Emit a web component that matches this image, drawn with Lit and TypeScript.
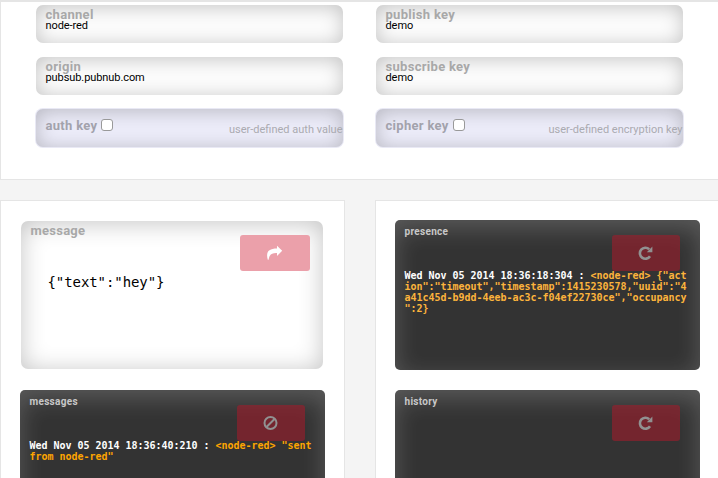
import { LitElement, html, css, svg } from "lit";
import { customElement, property } from "lit/decorators.js";
import { classMap } from "lit/directives/class-map.js";

type IconName = "send" | "reload" | "ban";

@customElement("glyph-icon")
class GlyphIcon extends LitElement {
  @property() name: IconName = "send";
  static styles = css`
    :host { display: block; width: 16px; height: 16px; }
    svg { display: block; }
  `;
  render() {
    const shapes = {
      send: svg`<path fill="currentColor" d="M10 .8 15.2 5.8 10 10.9V8C5.1 7.8 2.5 9 1.6 14.8H.8C-1.4 7 1.6 3.6 10 3.6Z"/>`,
      reload: svg`<path fill="none" stroke="currentColor" stroke-width="2.6" d="M12 11.2A5.5 5.5 0 1 1 11.2 4.2"/><path fill="currentColor" d="M14.4 1.6V7.2H8.8Z"/>`,
      ban: svg`<g fill="none" stroke="currentColor" stroke-width="2"><circle cx="7.5" cy="8" r="6"/><path d="M3.5 12 11.5 4"/></g>`,
    };
    return html`<svg width="16" height="16" viewBox="0 0 16 16">${shapes[this.name]}</svg>`;
  }
}

@customElement("key-field")
class KeyField extends LitElement {
  @property() label = "";
  @property() value = "";
  @property() hint = "";
  static styles = css`
    :host { display: block; }
    .field {
      height: 38px; box-sizing: border-box; border-radius: 7px; padding: 3px 9px 0 9.5px;
      background: #fdfdfd; box-shadow: inset 0 2px 20px rgba(0, 0, 0, 0.23);
    }
    .locked {
      display: flex; align-items: flex-start; padding: 8px 0.5px 0 9.5px; background: #ededfa;
      box-shadow: inset 0 2px 20px rgba(0, 0, 0, 0.23), 0 0 0 1px #e9e9f5;
    }
    .label { font: bold 13px/14px Roboto, sans-serif; letter-spacing: 0.3px; color: #a8a8a8; white-space: nowrap; }
    .locked .label { line-height: 17px; color: #a2a2ac; }
    .value { font: 11px/12px Roboto, sans-serif; letter-spacing: -0.08px; margin-top: -2px; color: #000; }
    .box {
      width: 12px; height: 12px; box-sizing: border-box; margin: 2px 0 0 4px; flex: none;
      border: 1px solid #999; border-radius: 3px; background: #fff;
    }
    .hint { font: 11px/14px Roboto, sans-serif; color: #aaaab0; margin: 6px 0 0 auto; white-space: nowrap; }
  `;
  render() {
    const locked = this.hint !== "";
    return html`<div class=${classMap({ field: true, locked })}>
      <div class="label">${this.label}</div>
      ${locked
        ? html`<span class="box"></span><span class="hint">${this.hint}</span>`
        : html`<div class="value">${this.value}</div>`}
    </div>`;
  }
}

@customElement("log-console")
class LogConsole extends LitElement {
  @property() heading = "";
  @property() icon: IconName = "reload";
  @property() time = "";
  @property() entry = "";
  @property({ type: Boolean, reflect: true }) soft = false;
  static styles = css`
    :host { display: block; flex: none; }
    .console {
      position: relative; height: 150px; box-sizing: border-box; border-radius: 5px;
      padding: 6px 9.5px 0; background: #333; box-shadow: inset 0 8px 24px rgba(255, 255, 255, 0.2);
    }
    .heading { font: bold 10px/12px Roboto, sans-serif; letter-spacing: 0.3px; color: #c8c8c8; }
    .action {
      position: absolute; right: 20px; top: 15px; width: 68px; height: 36px; border-radius: 3px;
      background: rgba(160, 28, 43, 0.6); color: #919191; display: grid; place-items: center;
    }
    .log {
      position: relative; margin-top: 32px; font: bold 10px/11px "DejaVu Sans Mono", monospace;
      letter-spacing: -0.02px; color: #fff; line-break: anywhere; width: 285px;
    }
    .entry { color: #ffa500; }
    :host([soft]) .entry { color: #fdb43c; }
  `;
  render() {
    return html`<div class="console">
      <div class="heading">${this.heading}</div>
      <div class="action"><glyph-icon .name=${this.icon}></glyph-icon></div>
      ${this.time ? html`<div class="log">${this.time} : <span class="entry">${this.entry}</span></div>` : ""}
    </div>`;
  }
}

@customElement("app-root")
class AppRoot extends LitElement {
  static styles = css`
    :host { display: block; height: 478px; overflow: hidden; background: #f4f4f4; }
    .keys {
      height: 180px; box-sizing: border-box; border: solid #e5e5e5; border-width: 2px 0 1px 1px;
      background: #fff; padding: 3px 0 0 35px; display: grid; grid-template-columns: 307px 307px;
      column-gap: 33px; grid-auto-rows: 38px; row-gap: 14px; align-content: start;
    }
    .columns { display: flex; gap: 30px; margin-top: 20px; }
    .panel {
      flex: none; width: 345px; height: 360px; box-sizing: border-box; background: #fff;
      border: 1px solid #e5e5e5; padding: 19px; display: flex; flex-direction: column; gap: 20px;
    }
    .compose {
      position: relative; flex: none; height: 148px; box-sizing: border-box; margin: 1px 2px 1px 1px;
      border-radius: 7px; padding: 2px 9px 0 9.5px; background: #fff;
      box-shadow: inset 0 2px 24px rgba(0, 0, 0, 0.24);
    }
    .label { font: bold 13px/16px Roboto, sans-serif; letter-spacing: 0.25px; color: #a8a8a8; }
    .payload { font: 14px/17px "DejaVu Sans Mono", monospace; letter-spacing: -0.08px; margin: 35px 0 0 17px; }
    .send {
      position: absolute; right: 13px; top: 14px; width: 70px; height: 36px; border-radius: 3px;
      background: #eba0aa; color: #fff; display: grid; place-items: center;
    }
  `;
  render() {
    return html`
      <section class="keys">
        <key-field label="channel" value="node-red"></key-field>
        <key-field label="publish key" value="demo"></key-field>
        <key-field label="origin" value="pubsub.pubnub.com"></key-field>
        <key-field label="subscribe key" value="demo"></key-field>
        <key-field label="auth key" hint="user-defined auth value"></key-field>
        <key-field label="cipher key" hint="user-defined encryption key"></key-field>
      </section>
      <div class="columns">
        <section class="panel">
          <div class="compose">
            <div class="label">message</div>
            <div class="payload">{"text":"hey"}</div>
            <div class="send"><glyph-icon name="send"></glyph-icon></div>
          </div>
          <log-console heading="messages" icon="ban" time="Wed Nov 05 2014 18:36:40:210"
            .entry=${'<node-red> "sent from node-red"'}></log-console>
        </section>
        <section class="panel">
          <log-console soft heading="presence" time="Wed Nov 05 2014 18:36:18:304"
            .entry=${'<node-red> {"action":"timeout","timestamp":1415230578,"uuid":"4a41c45d-b9dd-4eeb-ac3c-f04ef22730ce","occupancy":2}'}></log-console>
          <log-console heading="history"></log-console>
        </section>
      </div>`;
  }
}
